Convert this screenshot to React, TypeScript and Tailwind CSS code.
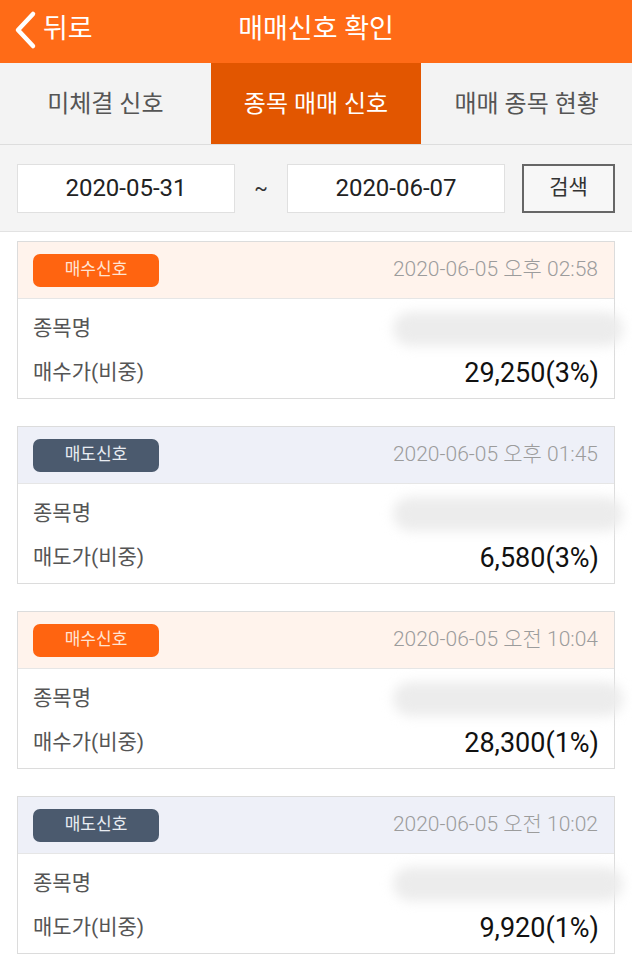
type Signal = {
  kind: "buy" | "sell";
  time: string;
  price: string;
};

const signals: Signal[] = [
  { kind: "buy", time: "2020-06-05 오후 02:58", price: "29,250(3%)" },
  { kind: "sell", time: "2020-06-05 오후 01:45", price: "6,580(3%)" },
  { kind: "buy", time: "2020-06-05 오전 10:04", price: "28,300(1%)" },
  { kind: "sell", time: "2020-06-05 오전 10:02", price: "9,920(1%)" },
];

const font = { fontFamily: '"Roboto", "Noto Sans CJK KR", sans-serif' };

function SignalCard({ signal }: { signal: Signal }) {
  const isBuy = signal.kind === "buy";
  return (
    <div className="h-[158px] border border-[#dcdcdc] bg-white">
      <div
        className={`flex h-[57px] items-center justify-between border-b border-[#e6e6e6] pl-[15px] pr-[16px] ${
          isBuy ? "bg-[#fff3ec]" : "bg-[#eef0f8]"
        }`}
      >
        <span
          className={`flex h-[33px] w-[126px] items-center justify-center rounded-[7px] text-[17px] ${
            isBuy ? "bg-[#ff6410] text-[#ffe3d2]" : "bg-[#4b5a6e] text-[#e8ecf2]"
          }`}
        >
          {isBuy ? "매수신호" : "매도신호"}
        </span>
        <span className="text-[21px] font-light text-[#9c9c9c]">{signal.time}</span>
      </div>
      <div className="flex flex-col px-[15px] pt-[8px]">
        <div className="flex h-[44px] items-center justify-between">
          <span className="text-[21px] text-[#555]">종목명</span>
          {/* redacted stock name */}
          <div className="mr-[-24px] h-[34px] w-[230px] rounded-full bg-[#ececec] blur-[6px]" />
        </div>
        <div className="flex h-[44px] items-center justify-between">
          <span className="text-[21px] text-[#555]">
            {isBuy ? "매수가(비중)" : "매도가(비중)"}
          </span>
          <span className="text-[27px] text-[#111]">{signal.price}</span>
        </div>
      </div>
    </div>
  );
}

export default function App() {
  const tabs = ["미체결 신호", "종목 매매 신호", "매매 종목 현황"];
  return (
    <div className="min-h-[960px] w-[632px] bg-white" style={font}>
      {/* Header */}
      <div className="relative flex h-[63px] items-center justify-center bg-[#ff6b17]">
        <div className="absolute left-[12px] top-0 flex h-full items-center text-white">
          <svg width="26" height="40" viewBox="0 0 26 40" className="mr-[5px] mt-[-4px]">
            <polyline
              points="21,4 6,20 21,36"
              fill="none"
              stroke="white"
              strokeWidth="4.5"
              strokeLinecap="round"
              strokeLinejoin="round"
            />
          </svg>
          <span className="mt-[-4px] text-[27px]">뒤로</span>
        </div>
        <span className="mt-[-4px] text-[27px] text-white">매매신호 확인</span>
      </div>

      {/* Tabs */}
      <div className="flex h-[82px] border-b border-[#dddddd] bg-[#f3f3f3]">
        {tabs.map((t, i) => (
          <div
            key={t}
            className={`flex flex-1 items-center justify-center text-[24px] ${
              i === 1 ? "bg-[#e25600] text-white" : "text-[#555]"
            }`}
          >
            {t}
          </div>
        ))}
      </div>

      {/* Search */}
      <div className="flex h-[87px] items-center border-b border-[#e2e2e2] bg-[#f4f4f4] px-[17px]">
        <div className="flex h-[49px] w-[218px] items-center justify-center border border-[#e0e0e0] bg-white text-[24px] text-[#222]">
          2020-05-31
        </div>
        <span className="flex w-[52px] justify-center text-[20px] text-[#333]">~</span>
        <div className="flex h-[49px] w-[218px] items-center justify-center border border-[#e0e0e0] bg-white text-[24px] text-[#222]">
          2020-06-07
        </div>
        <button className="ml-auto flex h-[49px] w-[93px] items-center justify-center border-2 border-[#666] bg-[#f7f7f7] text-[21px] text-[#333]">
          검색
        </button>
      </div>

      {/* Cards */}
      <div className="flex flex-col gap-[27px] px-[17px] pt-[9px] pb-[6px]">
        {signals.map((s) => (
          <SignalCard key={s.time} signal={s} />
        ))}
      </div>
    </div>
  );
}
